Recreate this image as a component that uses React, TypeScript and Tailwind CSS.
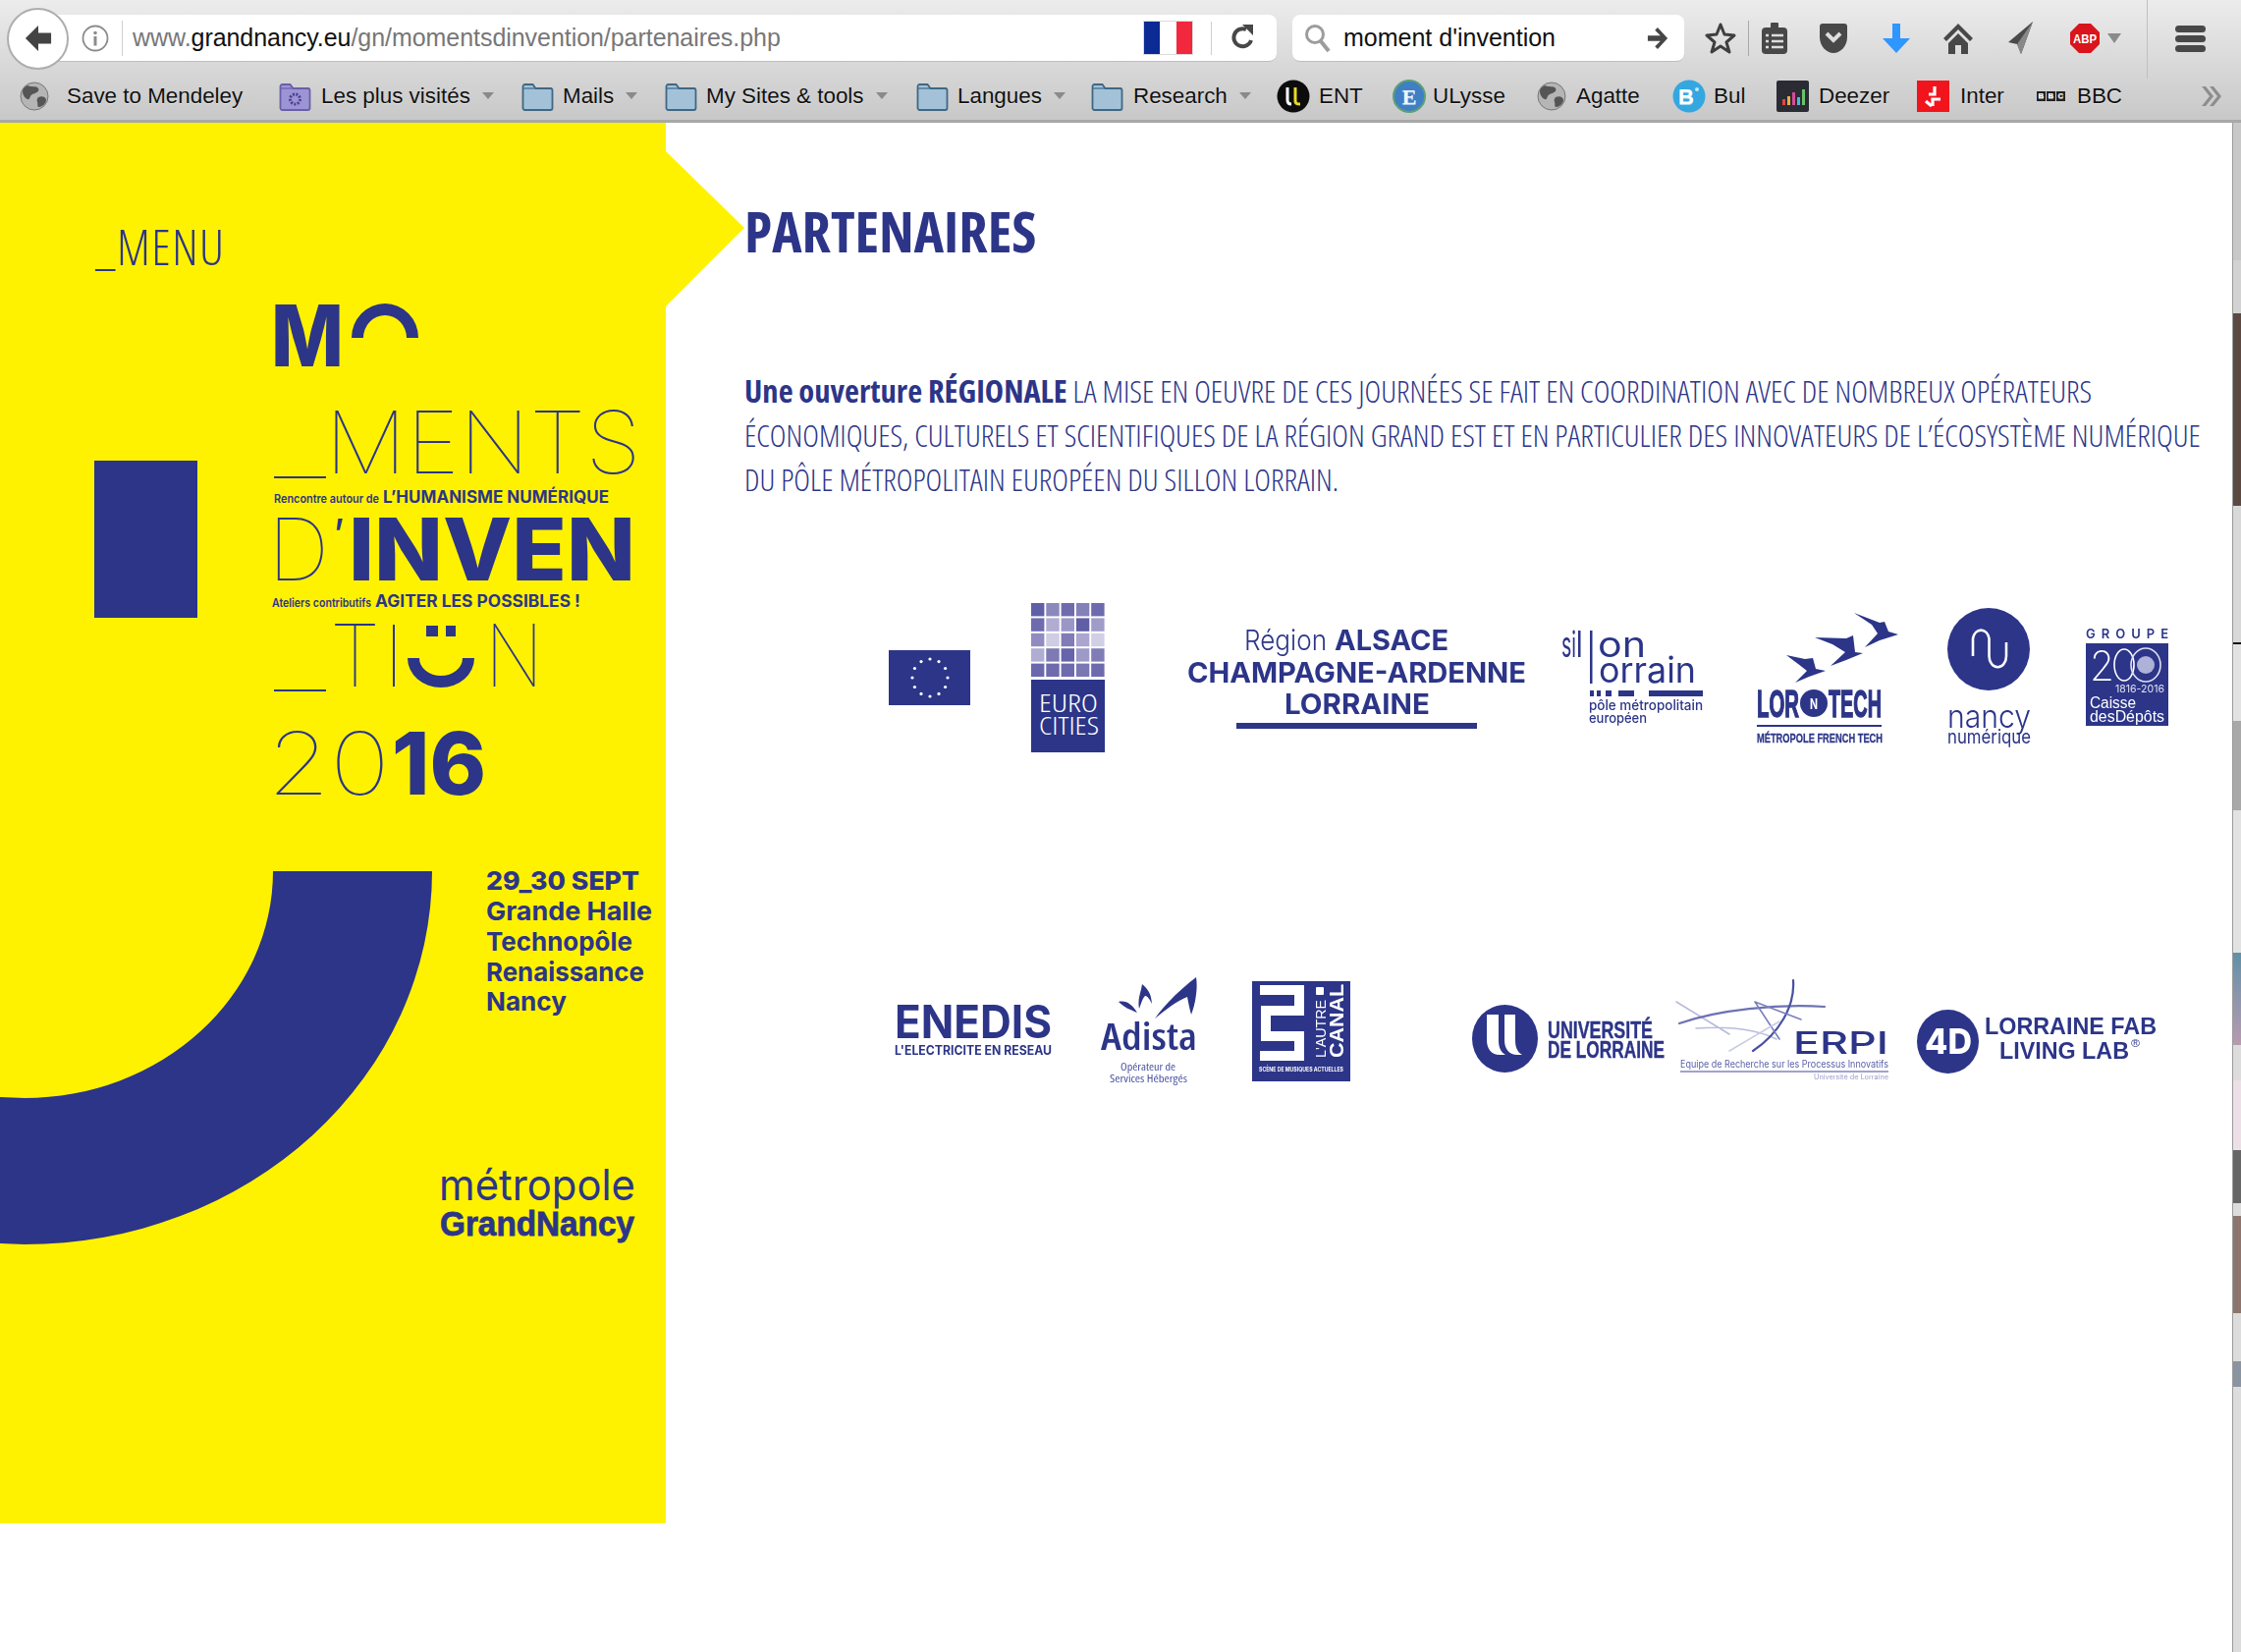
const BLUE = '#2c3588';
const SANS = 'Inter, sans-serif';
const COND = '"Open Sans", sans-serif';

// svg text squeezed to the exact width it has in the picture
function T({ x, y, w, s, b = 400, f = SANS, c = BLUE, children, ls, sw }: any) {
  return (
    <text x={x} y={y} fontSize={s} fontWeight={b} fontFamily={f} fill={c} stroke={sw ? c : undefined} strokeWidth={sw} textLength={w} lengthAdjust={ls ? 'spacing' : 'spacingAndGlyphs'} style={{ fontStretch: f === COND ? '75%' : undefined }}>
      {children}
    </text>
  );
}

function Globe() {
  return (
    <svg width="30" height="32" viewBox="0 0 30 32">
      <circle cx="15" cy="16" r="14" fill="#b5b5b5" stroke="#777" />
      <path d="M8 5c4 2 9 0 11 3s-3 5-6 6-2 6-5 5-5-5-5-8 3-5 5-6zM19 17c4-2 8 0 8 3s-4 7-7 7-1-3-2-5 0-4 1-5z" fill="#555" />
    </svg>
  );
}

function Folder({ purple }: { purple?: boolean }) {
  return (
    <svg width="33" height="32" viewBox="0 0 33 32">
      <path d="M1.5 6a2 2 0 0 1 2-2h8l3 4h15a2 2 0 0 1 2 2v18a2 2 0 0 1-2 2h-26a2 2 0 0 1-2-2z" fill={purple ? '#9d94d6' : '#a3c2d8'} stroke={purple ? '#6a5fa8' : '#3f6885'} strokeWidth="1.8" />
      <path d="M2 8h29" stroke={purple ? '#6a5fa8' : '#3f6885'} strokeWidth="1.2" />
      {purple && <circle cx="16.5" cy="19" r="5" fill="none" stroke="#4b4290" strokeWidth="3" strokeDasharray="2 1.4" />}
    </svg>
  );
}

function BookmarkIcon({ kind }: { kind: string }) {
  if (kind === 'globe') return <Globe />;
  if (kind === 'folder') return <Folder />;
  if (kind === 'purple') return <Folder purple />;
  if (kind === 'ent')
    return (
      <svg width="34" height="34" viewBox="0 0 34 34">
        <circle cx="17" cy="17" r="16.5" fill="#0c0c0c" />
        <path d="M11 8v13c0 3 2 4 4 4" fill="none" stroke="#fff" strokeWidth="3" />
        <path d="M19 8v14c0 2 2 3 5 3" fill="none" stroke="#e9d923" strokeWidth="3" />
      </svg>
    );
  if (kind === 'ulysse')
    return (
      <svg width="34" height="34" viewBox="0 0 34 34">
        <circle cx="17" cy="17" r="16" fill="#3f7fc4" stroke="#5f9f78" strokeWidth="2" />
        <text x="17" y="25" textAnchor="middle" fontSize="22" fontWeight="700" fontFamily="Liberation Serif, serif" fill="#eef4fb">E</text>
      </svg>
    );
  if (kind === 'bul')
    return (
      <svg width="35" height="34" viewBox="0 0 35 34">
        <circle cx="17" cy="17" r="16.5" fill="#34a7e0" />
        <text x="14" y="25" textAnchor="middle" fontSize="22" fontWeight="700" fontFamily="Liberation Sans, sans-serif" fill="#fff">B</text>
        <circle cx="25" cy="10" r="2" fill="#bfe8fa" />
      </svg>
    );
  if (kind === 'deezer')
    return (
      <svg width="33" height="32" viewBox="0 0 33 32">
        <rect width="33" height="32" rx="2" fill="#2b2b33" />
        <rect x="6" y="19" width="3" height="6" fill="#e0483e" />
        <rect x="11" y="16" width="3" height="9" fill="#e9b13c" />
        <rect x="16" y="12" width="3" height="13" fill="#d14d9a" />
        <rect x="21" y="17" width="3" height="8" fill="#4cb6d6" />
        <rect x="26" y="9" width="3" height="16" fill="#69c36b" />
      </svg>
    );
  if (kind === 'inter')
    return (
      <svg width="33" height="32" viewBox="0 0 33 32">
        <rect width="33" height="32" fill="#f2141c" />
        <path d="M18 6v8h-6M16 26v-7h8M9 21l6 5" fill="none" stroke="#fff" strokeWidth="3.2" />
      </svg>
    );
  return (
    <div className="flex gap-[1px]">
      {['B', 'B', 'C'].map((l, i) => (
        <span key={i} className="flex h-[10px] w-[9px] items-center justify-center bg-[#222] text-[8px] font-bold leading-none text-white">{l}</span>
      ))}
    </div>
  );
}

const bookmarks = [
  { kind: 'globe', label: 'Save to Mendeley', width: 'w-[264px]', gap: 'w-[48px]' },
  { kind: 'purple', label: 'Les plus visités', width: 'w-[247px]', gap: 'w-[43px]', arrow: true },
  { kind: 'folder', label: 'Mails', width: 'w-[146px]', gap: 'w-[42px]', arrow: true },
  { kind: 'folder', label: 'My Sites & tools', width: 'w-[256px]', gap: 'w-[42px]', arrow: true },
  { kind: 'folder', label: 'Langues', width: 'w-[178px]', gap: 'w-[42px]', arrow: true },
  { kind: 'folder', label: 'Research', width: 'w-[189px]', gap: 'w-[43px]', arrow: true },
  { kind: 'ent', label: 'ENT', width: 'w-[118px]', gap: 'w-[43px]' },
  { kind: 'ulysse', label: 'ULysse', width: 'w-[147px]', gap: 'w-[41px]' },
  { kind: 'globe', label: 'Agatte', width: 'w-[138px]', gap: 'w-[40px]' },
  { kind: 'bul', label: 'Bul', width: 'w-[106px]', gap: 'w-[42px]' },
  { kind: 'deezer', label: 'Deezer', width: 'w-[143px]', gap: 'w-[43px]' },
  { kind: 'inter', label: 'Inter', width: 'w-[122px]', gap: 'w-[44px]' },
  { kind: 'bbc', label: 'BBC', width: 'w-[166px]', gap: 'w-[41px]' },
];

function Toolbar() {
  return (
    <header className="h-[125px] border-b-[3px] border-[#a8a8a8] bg-linear-to-b from-[#ececec] to-[#c8c8c8] font-['Liberation_Sans',sans-serif]">
      <div className="flex h-[78px] items-center pl-[7px]">
        <div className="relative z-10 flex h-[63px] w-[63px] items-center justify-center rounded-full border-2 border-[#aeaeae] bg-white">
          <svg width="28" height="28" viewBox="0 0 30 30">
            <path d="M15 1 1 15l14 14 0-8h14V9H15z" fill="#434343" />
          </svg>
        </div>
        <div className="-ml-[30px] flex h-[48px] w-[1260px] items-center rounded-r-lg border-b border-[#bdbdbd] bg-white">
          <svg className="ml-[42px] shrink-0" width="30" height="30" viewBox="0 0 30 30">
            <circle cx="15" cy="15" r="12.5" fill="none" stroke="#8c8c8c" strokeWidth="1.8" />
            <circle cx="15" cy="9.5" r="1.8" fill="#8c8c8c" />
            <rect x="13.5" y="13" width="3" height="9.5" fill="#8c8c8c" />
          </svg>
          <div className="ml-[12px] h-[36px] w-px bg-[#cfcfcf]" />
          <div className="ml-[10px] text-[25px] tracking-[-0.05px] text-[#777]">
            www.<span className="text-[#111]">grandnancy.eu</span>/gn/momentsdinvention/partenaires.php
          </div>
          <div className="ml-auto flex h-[35px] w-[51px] border border-[#dcdcdc]">
            <div className="flex-1 bg-[#0b2a94]" />
            <div className="flex-1 bg-white" />
            <div className="flex-1 bg-[#f1283e]" />
          </div>
          <div className="ml-[18px] h-[34px] w-px bg-[#cfcfcf]" />
          <svg className="ml-[18px] mr-[20px]" width="28" height="30" viewBox="0 0 28 30">
            <path d="M22 17a9 9 0 1 1-5-11" fill="none" stroke="#474747" strokeWidth="4" />
            <path d="M13 1h11v11z" fill="#474747" />
          </svg>
        </div>
        <div className="ml-[16px] flex h-[48px] w-[399px] items-center rounded-lg border-b border-[#bdbdbd] bg-white">
          <svg className="ml-[12px]" width="28" height="32" viewBox="0 0 28 32">
            <circle cx="11" cy="12" r="8.5" fill="none" stroke="#9c9c9c" strokeWidth="3" />
            <path d="M17 19l8 10" stroke="#9c9c9c" strokeWidth="4" />
          </svg>
          <span className="ml-[12px] text-[25px] text-[#111]">moment d'invention</span>
          <svg className="ml-auto mr-[16px]" width="22" height="26" viewBox="0 0 24 26">
            <path d="M12 1l11 12-11 12-3-3 6-6H1v-6h14L9 4z" fill="#464646" />
          </svg>
        </div>
        <div className="ml-[19px] flex h-[36px] w-[36px] items-center justify-center">
          <svg width="32" height="34" viewBox="0 0 32 34">
            <path d="M16 3l4 10 10 1-8 7 3 10-9-6-9 6 3-10-8-7 10-1z" fill="none" stroke="#3f3f3f" strokeWidth="3" strokeLinejoin="round" />
          </svg>
        </div>
        <div className="ml-[10px] h-[36px] w-px bg-[#a9a9a9]" />
        <div className="ml-[8px] flex h-[36px] w-[36px] items-center justify-center">
          <svg width="28" height="32" viewBox="0 0 28 32">
            <rect x="1" y="5" width="26" height="27" rx="4" fill="#484848" />
            <rect x="10" y="0" width="8" height="8" rx="1" fill="#484848" />
            <path d="M5 13h3M11 13h12M5 19h3M11 19h12M5 25h3M11 25h12" stroke="#ddd" strokeWidth="2.4" />
          </svg>
        </div>
        <div className="ml-[24px] flex h-[36px] w-[36px] items-center justify-center">
          <svg width="30" height="32" viewBox="0 0 30 32">
            <path d="M1 4a3 3 0 0 1 3-3h22a3 3 0 0 1 3 3v11c0 9-7 16-14 16S1 24 1 15z" fill="#484848" />
            <path d="M8 11l7 7 7-7" fill="none" stroke="#ddd" strokeWidth="4" />
          </svg>
        </div>
        <div className="ml-[28px] flex h-[36px] w-[36px] items-center justify-center">
          <svg width="30" height="32" viewBox="0 0 30 32">
            <path d="M11 1h8v15h10L15 31 1 16h10z" fill="#2e96ff" />
          </svg>
        </div>
        <div className="ml-[27px] flex h-[36px] w-[36px] items-center justify-center">
          <svg width="30" height="32" viewBox="0 0 30 32">
            <path d="M15 1 0 16l3 3L15 7l12 12 3-3zM15 11 5 21v11h7v-9h6v9h7V21z" fill="#484848" />
          </svg>
        </div>
        <div className="ml-[28px] flex h-[36px] w-[36px] items-center justify-center">
          <svg width="28" height="34" viewBox="0 0 28 34">
            <path d="M26 0 1 21l9 2 4 10 3-8z" fill="#4a4a4a" />
            <path d="M26 0 10 23l4 10z" fill="#888" />
          </svg>
        </div>
        <div className="ml-[29px] flex h-[36px] w-[36px] items-center justify-center">
          <svg width="32" height="32" viewBox="0 0 32 32">
            <path d="M10 1h12l9 9v12l-9 9H10l-9-9V10z" fill="#d9141c" />
            <text x="16" y="21" textAnchor="middle" fontSize="13" fontWeight="700" fontFamily="Liberation Sans, sans-serif" fill="#fff" textLength="24" lengthAdjust="spacingAndGlyphs">ABP</text>
          </svg>
        </div>
        <div className="ml-[5px] h-0 w-0 border-x-[7px] border-t-[10px] border-x-transparent border-t-[#8a8a8a]" />
        <div className="ml-[26px] h-[80px] w-px self-start bg-[#c0c0c0]" />
        <div className="ml-[28px] flex w-[31px] flex-col gap-[3px]">
          <div className="h-[7px] rounded-full bg-[#484848]" />
          <div className="h-[7px] rounded-full bg-[#484848]" />
          <div className="h-[7px] rounded-full bg-[#484848]" />
        </div>
      </div>
      <div className="flex h-[40px] items-center pl-[20px] text-[22.4px] text-[#111] [text-shadow:0_1px_0_rgba(255,255,255,0.55)]">
        {bookmarks.map(b => (
          <div key={b.label} className={`flex shrink-0 items-center ${b.width}`}>
            <span className={`flex shrink-0 items-center ${b.gap}`}>
              <BookmarkIcon kind={b.kind} />
            </span>
            <span>{b.label}</span>
            {b.arrow && <span className="ml-[12px] h-0 w-0 border-x-[6px] border-t-[7px] border-x-transparent border-t-[#8a8a8a]" />}
          </div>
        ))}
        <svg width="24" height="22" viewBox="0 0 24 22">
          <path d="M2 1l8 10-8 10h4l8-10L6 1zM10 1l8 10-8 10h4l8-10-8-10z" fill="#8d8d8d" />
        </svg>
      </div>
    </header>
  );
}

function Poster() {
  return (
    <svg className="absolute left-0 top-0 overflow-visible" width="678" height="1426" viewBox="0 125 678 1426">
      <polygon points="677,153 758,232 677,313" fill="#fff200" />
      <T x={276} y={373} w={74} s={87} b={800}>M</T>
      <path d="M358 344A34 35 0 0 1 426 344H414A22 23 0 0 0 370 344Z" fill={BLUE} />
      <rect x={279} y={485} width={53} height={2} fill={BLUE} />
      <T x={331} y={482} w={322} s={88} b={100}>MENTS</T>
      <T x={279} y={512} w={107} s={12} b={600}>Rencontre autour de</T>
      <T x={390} y={512} w={230} s={17} b={700}>L’HUMANISME NUMÉRIQUE</T>
      <T x={273} y={591} w={62} s={88} b={100}>D</T>
      <T x={340} y={557} w={10} s={40} b={600}>’</T>
      <T x={355} y={591} w={292} s={88} b={800}>INVEN</T>
      <T x={277} y={618} w={101} s={12} b={600}>Ateliers contributifs</T>
      <T x={382} y={618} w={209} s={17} b={700}>AGITER LES POSSIBLES !</T>
      <rect x={279} y={702} width={53} height={2} fill={BLUE} />
      <T x={336} y={699} w={51} s={88} b={100}>T</T>
      <rect x={400} y={636} width={2} height={63} fill={BLUE} />
      <rect x={434} y={637} width={12} height={11} fill={BLUE} />
      <rect x={454} y={637} width={10} height={11} fill={BLUE} />
      <path d="M415 670A34 30 0 0 0 483 670H471A22 18 0 0 1 427 670Z" fill={BLUE} />
      <T x={494} y={699} w={59} s={88} b={100}>N</T>
      <T x={272} y={809} w={125} s={88} b={100}>20</T>
      <T x={399} y={809} w={96} s={88} b={800}>16</T>
      <path d="M278 887A253 231 0 0 1 25 1118L0 1117V1266L25 1267A415 380 0 0 0 440 887Z" fill={BLUE} />
      <T x={495} y={906} w={156} s={26} b={800}>29_30 SEPT</T>
      <T x={495} y={937} w={169} s={26} b={700}>Grande Halle</T>
      <T x={495} y={968} w={149} s={26} b={700}>Technopôle</T>
      <T x={495} y={999} w={161} s={26} b={700}>Renaissance</T>
      <T x={495} y={1029} w={82} s={26} b={700}>Nancy</T>
      <T x={447} y={1222} w={200} s={44} b={400}>métropole</T>
      <T x={448} y={1258} w={198} s={35} b={800} sw={0.8} f='"Liberation Sans", sans-serif'>GrandNancy</T>
    </svg>
  );
}

function Logo({ x, w, y, h, className = '', children }: any) {
  return (
    <svg className={`shrink-0 ${className}`} width={w} height={h} viewBox={`${x} ${y} ${w} ${h}`}>
      {children}
    </svg>
  );
}

const gridColors = [
  '#5f5fa8', '#8c88bc', '#6f6cae', '#8480b8', '#6d6bad',
  '#6e6cae', '#b0acd2', '#9a96c6', '#5f5ea6', '#a09cc9',
  '#908cc0', '#cfcde3', '#7f7cb6', '#aaa6cf', '#d1cfe6',
  '#b0add3', '#7d7ab4', '#6664aa', '#9e9ac8', '#807db6',
  '#6b69ac', '#6d6bad', '#6d6bad', '#7a78b3', '#6d6bad',
];

const LIB = '"Liberation Sans", sans-serif';

function PartnersTop() {
  const y = 590;
  const h = 190;
  return (
    <div className="flex pl-[227px] blur-[0.4px]">
      <Logo x={905} w={83} y={y} h={h}>
        <rect x={905} y={662} width={83} height={56} fill={BLUE} />
        {Array.from({ length: 12 }).map((_, i) => (
          <circle key={i} cx={947 + 18 * Math.cos((i * Math.PI) / 6)} cy={690 + 19 * Math.sin((i * Math.PI) / 6)} r={1.6} fill="#fff" />
        ))}
      </Logo>
      <Logo x={1050} w={75} y={y} h={h} className="ml-[62px]">
        {gridColors.map((c, i) => (
          <rect key={i} x={1050 + (i % 5) * 15.3} y={614 + Math.floor(i / 5) * 15.4} width={13.4} height={13.4} fill={c} />
        ))}
        <rect x={1050} y={692} width={75} height={74} fill={BLUE} />
        <T x={1058} y={725} w={60} s={25} b={300} c="#fff" f={COND}>EURO</T>
        <T x={1058} y={748} w={61} s={25} b={300} c="#fff" f={COND}>CITIES</T>
      </Logo>
      <Logo x={1205} w={352} y={y} h={h} className="ml-[80px]">
        <T x={1267} y={662} w={84} s={29} b={300}>Région</T>
        <T x={1359} y={662} w={116} s={29} b={700}>ALSACE</T>
        <T x={1209} y={695} w={345} s={29} b={700}>CHAMPAGNE-ARDENNE</T>
        <T x={1308} y={727} w={148} s={29} b={700}>LORRAINE</T>
        <rect x={1259} y={736} width={245} height={6} fill={BLUE} />
      </Logo>
      <Logo x={1588} w={150} y={y} h={h} className="ml-[31px]">
        <T x={1590} y={669} w={15} s={36}>si</T>
        <rect x={1607} y={642} width={2.5} height={27} fill={BLUE} />
        <rect x={1619} y={642} width={2.5} height={54} fill={BLUE} />
        <T x={1627} y={669} w={49} s={36}>on</T>
        <T x={1628} y={695} w={99} s={36}>orrain</T>
        <rect x={1619} y={703} width={4} height={6} fill={BLUE} />
        <rect x={1626} y={703} width={4} height={6} fill={BLUE} />
        <rect x={1635} y={703} width={6} height={6} fill={BLUE} />
        <rect x={1648} y={703} width={16} height={6} fill={BLUE} />
        <rect x={1679} y={703} width={55} height={6} fill={BLUE} />
        <T x={1618} y={723} w={116} s={14} b={500}>pôle métropolitain</T>
        <T x={1618} y={736} w={59} s={14} b={500}>européen</T>
      </Logo>
      <Logo x={1785} w={155} y={y} h={h} className="ml-[47px]">
        <polygon points="1888,624 1914,634 1919,633 1923,643 1933,646 1914,652 1899,659 1912,645 1906,636" fill={BLUE} />
        <polygon points="1848,649 1880,650 1887,647 1889,664 1897,665 1880,672 1864,678 1879,664 1866,656" fill={BLUE} />
        <polygon points="1819,667 1838,671 1846,670 1849,681 1859,683 1842,689 1828,695 1840,683 1831,676" fill={BLUE} />
        <T x={1789} y={730} w={43} s={38} b={800} sw={1.4} f={LIB}>LOR</T>
        <circle cx={1847} cy={716} r={14} fill={BLUE} />
        <T x={1843} y={722} w={8} s={14} b={700} c="#fff">N</T>
        <T x={1862} y={730} w={54} s={38} b={800} sw={1.4} f={LIB}>TECH</T>
        <rect x={1789} y={738} width={127} height={2} fill={BLUE} />
        <T x={1789} y={756} w={128} s={13} b={800} sw={0.3} f={LIB}>MÉTROPOLE FRENCH TECH</T>
      </Logo>
      <Logo x={1980} w={92} y={y} h={h} className="ml-[40px]">
        <circle cx={2025} cy={661} r={42} fill={BLUE} />
        <path d="M2009 668V650a8.5 11 0 0 1 16.5 0V668a8.5 11 0 0 0 17.5 0V654" fill="none" stroke="#fff" strokeWidth={2.6} />
        <T x={1983} y={741} w={85} s={32} b={300}>nancy</T>
        <T x={1983} y={757} w={85} s={19} b={400}>numérique</T>
      </Logo>
      <Logo x={2122} w={88} y={y} h={h} className="ml-[50px]">
        <T x={2124} y={650} w={84} s={13} b={600} ls>GROUPE</T>
        <rect x={2124} y={655} width={84} height={84} fill={BLUE} />
        <T x={2128} y={693} w={25} s={42} b={200} c="#fff">2</T>
        <ellipse cx={2163} cy={677} rx={10} ry={16} fill="none" stroke="#fff" strokeWidth={1.6} />
        <ellipse cx={2185} cy={677} rx={15} ry={17} fill="none" stroke="#dfe0f0" strokeWidth={1.6} />
        <circle cx={2185} cy={677} r={9} fill="#aeb1d8" />
        <T x={2154} y={705} w={50} s={11} c="#dfe0f0">1816-2016</T>
        <T x={2128} y={721} w={47} s={16} b={500} c="#fff" f={LIB}>Caisse</T>
        <T x={2128} y={735} w={76} s={16} b={500} c="#fff" f={LIB}>desDépôts</T>
      </Logo>
    </div>
  );
}

function PartnersBottom() {
  const y = 985;
  const h = 125;
  return (
    <div className="flex pl-[231px] blur-[0.4px]">
      <Logo x={909} w={165} y={y} h={h}>
        <T x={911} y={1057} w={160} s={46} b={700}>ENEDIS</T>
        <T x={911} y={1074} w={160} s={13} b={700}>L'ELECTRICITE EN RESEAU</T>
      </Logo>
      <Logo x={1118} w={104} y={y} h={h} className="ml-[44px]">
        <path d="M1139 1020c8-2 14 3 19 11-7-3-13-5-19-11zM1160 1027c-2-10 2-17 3-25 7 6 9 10 10 20-3-6-5-8-7-8-3 3-4 8-6 13zM1176 1037c10-14 26-30 42-42 2 12-1 28-5 38-2-7-3-13-4-18-12 5-22 13-33 22z" fill={BLUE} />
        <T x={1121} y={1069} w={98} s={38} b={600} f={COND}>Adista</T>
        <T x={1141} y={1090} w={56} s={11} c="#4a52a0" f={COND}>Opérateur de</T>
        <T x={1130} y={1102} w={79} s={11} c="#4a52a0" f={COND}>Services Hébergés</T>
      </Logo>
      <Logo x={1275} w={100} y={y} h={h} className="ml-[53px]">
        <rect x={1275} y={999} width={100} height={102} fill={BLUE} />
        <path d="M1283 1008H1323V1029H1289V1055H1323V1075H1283" fill="none" stroke="#fff" strokeWidth={10} />
        <rect x={1340} y={1005} width={8} height={8} rx={1} fill="#fff" />
        <g transform="rotate(-90 1350 1077)">
          <T x={1350} y={1077} w={59} s={14} b={500} c="#fff" f={LIB}>L'AUTRE</T>
        </g>
        <g transform="rotate(-90 1368 1077)">
          <T x={1368} y={1077} w={75} s={20} b={700} c="#fff" f={LIB}>CANAL</T>
        </g>
        <T x={1282} y={1091} w={86} s={6} b={700} c="#fff">SCÈNE DE MUSIQUES ACTUELLES</T>
      </Logo>
      <Logo x={1497} w={206} y={y} h={h} className="ml-[122px]">
        <ellipse cx={1532.5} cy={1057.5} rx={33.5} ry={34.5} fill={BLUE} />
        <path d="M1514 1033v26c0 9 5 15 13 15h6c-5-3-7-8-7-15v-26zM1532 1033v26c0 9 5 15 13 15h5c-5-3-7-8-7-15v-26z" fill="#fff" />
        <T x={1576} y={1057} w={107} s={23} b={700} sw={0.4} f={LIB}>UNIVERSITÉ</T>
        <T x={1576} y={1077} w={119} s={23} b={700} sw={0.4} f={LIB}>DE LORRAINE</T>
      </Logo>
      <Logo x={1703} w={225} y={y} h={h}>
        <g fill="none" strokeLinecap="round">
          <path d="M1707 1020l54 33M1727 1047c28-2 60 0 82 11" stroke="#b9bbdc" strokeWidth={1.6} />
          <path d="M1710 1042c40-14 100-20 148-17" stroke="#6d72b3" strokeWidth={2.2} />
          <path d="M1826 998c2 26-14 54-41 72" stroke="#4a51a0" strokeWidth={2.2} />
          <path d="M1787 1020l25 38M1787 1020l47 18" stroke="#7b80ba" strokeWidth={1.6} />
          <path d="M1761 1070l51-30" stroke="#c8cae3" strokeWidth={1.6} />
        </g>
        <T x={1826} y={1073} w={97} s={31} b={500}>ERPI</T>
        <T x={1711} y={1087} w={212} s={10} c="#5a61a8">Equipe de Recherche sur les Processus Innovatifs</T>
        <rect x={1711} y={1090} width={212} height={2} fill="#a0a3cf" />
        <T x={1847} y={1099} w={76} s={7} c="#9a9dc8">Université de Lorraine</T>
      </Logo>
      <Logo x={1948} w={252} y={y} h={h} className="ml-[20px]">
        <ellipse cx={1983.5} cy={1060.5} rx={31.5} ry={32.5} fill={BLUE} />
        <T x={1960} y={1073} w={48} s={36} b={800} c="#fff">4D</T>
        <T x={2021} y={1053} w={175} s={24} b={700} f={LIB}>LORRAINE FAB</T>
        <T x={2036} y={1078} w={132} s={24} b={700} f={LIB}>LIVING LAB</T>
        <T x={2170} y={1066} w={9} s={11} f={LIB}>®</T>
      </Logo>
    </div>
  );
}

const strip = [
  { h: 'h-[140px]', c: 'bg-[#c8c8c8]' },
  { h: 'h-[54px]', c: 'bg-[#d2d2d2]' },
  { h: 'h-[196px]', c: 'bg-[#5a4a42]' },
  { h: 'h-[139px]', c: 'bg-[#d8d8d8]' },
  { h: 'h-[2px]', c: 'bg-[#111]' },
  { h: 'h-[78px]', c: 'bg-[#e2e2e2]' },
  { h: 'h-[91px]', c: 'bg-[#a8a8a8]' },
  { h: 'h-[145px]', c: 'bg-[#e2e2e2]' },
  { h: 'h-[94px]', c: 'bg-linear-to-b from-[#5f90a8] to-[#b79ab0]' },
  { h: 'h-[36px]', c: 'bg-[#dcdcdc]' },
  { h: 'h-[71px]', c: 'bg-[#ecdfe6]' },
  { h: 'h-[54px]', c: 'bg-[#666]' },
  { h: 'h-[13px]', c: 'bg-[#dcdcdc]' },
  { h: 'h-[99px]', c: 'bg-[#8b756c]' },
  { h: 'h-[49px]', c: 'bg-[#dcdcdc]' },
  { h: 'h-[26px]', c: 'bg-[#8a93a0]' },
  { h: 'h-[270px]', c: 'bg-[#dcdcdc]' },
];

export default function App() {
  return (
    <div className="h-[1682px] w-[2282px] overflow-hidden bg-white">
      <Toolbar />
      <main className="flex">
        <aside className="relative h-[1426px] w-[678px] shrink-0 bg-[#fff200]">
          <div className="pl-[97px] pt-[94px] font-['Open_Sans',sans-serif] text-[50px] font-light leading-[64px] tracking-[1.5px] text-[#2c3588] [font-stretch:75%]">_MENU</div>
          <div className="ml-[96px] mt-[186px] h-[160px] w-[105px] bg-[#2c3588]" />
          <Poster />
        </aside>
        <section className="relative z-10 min-w-0 flex-1 font-['Open_Sans',sans-serif] text-[#2c3588] [font-stretch:75%]">
          <h1 className="pl-[80px] pt-[70px] text-[57.5px] font-bold leading-[80px]">PARTENAIRES</h1>
          <p className="mt-[100px] whitespace-nowrap pl-[80px] text-[31.7px] font-light leading-[45px]">
            <strong className="text-[32.6px] font-bold">Une ouverture RÉGIONALE</strong> LA MISE EN OEUVRE DE CES JOURNÉES SE FAIT EN COORDINATION AVEC DE NOMBREUX OPÉRATEURS
            <br />
            ÉCONOMIQUES, CULTURELS ET SCIENTIFIQUES DE LA RÉGION GRAND EST ET EN PARTICULIER DES INNOVATEURS DE L’ÉCOSYSTÈME NUMÉRIQUE
            <br />
            DU PÔLE MÉTROPOLITAIN EUROPÉEN DU SILLON LORRAIN.
          </p>
          <div className="mt-[80px]">
            <PartnersTop />
          </div>
          <div className="mt-[205px]">
            <PartnersBottom />
          </div>
        </section>
        <div className="flex w-[9px] shrink-0 flex-col border-l border-[#9a9a9a]">
          {strip.map((s, i) => (
            <div key={i} className={`${s.h} ${s.c}`} />
          ))}
        </div>
      </main>
    </div>
  );
}
